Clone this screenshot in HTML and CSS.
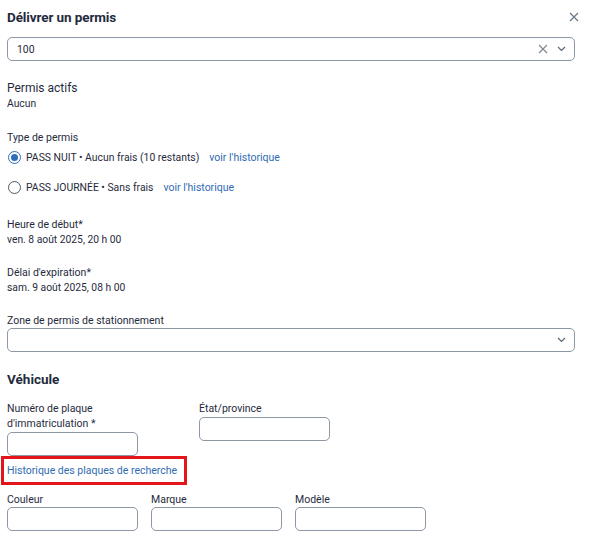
FILE: index.html
```html
<!DOCTYPE html>
<html lang="fr">
<head>
<meta charset="utf-8">
<link rel="stylesheet" href="styles.css">
</head>
<body>
<div class="dialog">
  <div class="header">
    <h1 class="title">Délivrer un permis</h1>
    <svg class="close" width="10" height="10" viewBox="0 0 10 10"><path d="M1 1L9 9M9 1L1 9" stroke="#6b7785" stroke-width="1.2" fill="none"/></svg>
  </div>
  <div class="select main-select">
    <span class="select-value">100</span>
    <span class="select-icons">
      <svg width="10" height="10" viewBox="0 0 10 10"><path d="M1 1L9 9M9 1L1 9" stroke="#7d8895" stroke-width="1.1" fill="none"/></svg>
      <svg width="9" height="6" viewBox="0 0 9 6"><path d="M1 1L4.5 4.5L8 1" stroke="#5a6674" stroke-width="1.2" fill="none"/></svg>
    </span>
  </div>

  <div class="block active">
    <div class="label-lg">Permis actifs</div>
    <div class="value">Aucun</div>
  </div>

  <div class="block type">
    <div class="label">Type de permis</div>
    <div class="radio-row">
      <span class="radio checked"></span>
      <span class="radio-text">PASS NUIT • Aucun frais (10 restants)</span>
      <a class="link">voir l'historique</a>
    </div>
    <div class="radio-row">
      <span class="radio"></span>
      <span class="radio-text">PASS JOURNÉE • Sans frais</span>
      <a class="link">voir l'historique</a>
    </div>
  </div>

  <div class="block start">
    <div class="label">Heure de début*</div>
    <div class="value">ven. 8 août 2025, 20 h 00</div>
  </div>

  <div class="block expire">
    <div class="label">Délai d'expiration*</div>
    <div class="value">sam. 9 août 2025, 08 h 00</div>
  </div>

  <div class="block zone">
    <div class="label">Zone de permis de stationnement</div>
    <div class="select zone-select">
      <span class="select-value"></span>
      <span class="select-icons">
        <svg width="9" height="6" viewBox="0 0 9 6"><path d="M1 1L4.5 4.5L8 1" stroke="#5a6674" stroke-width="1.2" fill="none"/></svg>
      </span>
    </div>
  </div>

  <h2 class="section">Véhicule</h2>

  <div class="row plate-row">
    <div class="field">
      <div class="label">Numéro de plaque d'immatriculation *</div>
      <div class="input"></div>
    </div>
    <div class="field">
      <div class="label">État/province</div>
      <div class="input"></div>
    </div>
  </div>

  <div class="history">
    <a class="link">Historique des plaques de recherche</a>
  </div>

  <div class="row car-row">
    <div class="field">
      <div class="label">Couleur</div>
      <div class="input"></div>
    </div>
    <div class="field">
      <div class="label">Marque</div>
      <div class="input"></div>
    </div>
    <div class="field">
      <div class="label">Modèle</div>
      <div class="input"></div>
    </div>
  </div>
</div>
</body>
</html>
```
FILE: styles.css
```css
* { box-sizing: border-box; }
html, body { margin: 0; padding: 0; background: #ffffff; }
body {
  font-family: Roboto, "Liberation Sans", sans-serif;
  color: #1f2b3d;
  font-size: 10.4px;
}
.dialog {
  width: 591px;
  padding: 0 16px 0 7px;
}
.header {
  display: flex;
  align-items: center;
  justify-content: space-between;
  height: 33px;
  padding-top: 0;
}
.title {
  margin: 0;
  font-size: 13.5px;
  font-weight: 700;
  color: #1f2b3d;
  letter-spacing: -0.1px;
}
.close { margin-right: -4px; }
.select {
  display: flex;
  align-items: center;
  justify-content: space-between;
  border: 1px solid #8c98a6;
  border-radius: 5px;
  height: 24px;
  padding: 0 8px 0 9px;
}
.main-select { margin-top: 4px; }
.select-value { font-size: 10.4px; color: #1f2b3d; }
.select-icons { display: flex; align-items: center; gap: 9px; }
.block { display: flex; flex-direction: column; }
.active { margin-top: 19px; }
.label-lg { font-size: 12px; line-height: 16px; color: #1f2b3d; }
.label { font-size: 10.5px; line-height: 15px; color: #1f2b3d; }
.value { font-size: 10.3px; line-height: 15px; color: #1f2b3d; }
.type { margin-top: 19px; }
.radio-row {
  display: flex;
  align-items: center;
  height: 30px;
  margin-top: -3px;
}
.radio-row + .radio-row { margin-top: 0; }
.radio {
  width: 13px;
  height: 13px;
  border: 1px solid #4d5966;
  border-radius: 50%;
  margin: 0 5px 0 1px;
  position: relative;
  flex: none;
}
.radio.checked { border-color: #2f6fba; }
.radio.checked::after {
  content: "";
  position: absolute;
  left: 2px; top: 2px;
  width: 7px; height: 7px;
  border-radius: 50%;
  background: #2f6fba;
}
.radio-text { font-size: 10.4px; color: #1f2b3d; margin-right: 10px; }
.link { color: #2f6bb3; font-size: 10.5px; text-decoration: none; white-space: nowrap; }
.start { margin-top: 15px; }
.expire { margin-top: 18px; }
.zone { margin-top: 18px; }
.zone-select { margin-top: 0; height: 24px; justify-content: flex-end; }
.section {
  margin: 18px 0 0;
  font-size: 13.5px;
  font-weight: 700;
  line-height: 18px;
  color: #1f2b3d;
}
.row { display: flex; align-items: flex-start; }
.plate-row { margin-top: 13px; gap: 61px; }
.car-row { gap: 13px; margin-top: 7px; }
.car-row .input { margin-top: 0; }
.field { width: 131px; display: flex; flex-direction: column; }
.input {
  height: 24px;
  border: 1px solid #8c98a6;
  border-radius: 5px;
  margin-top: 1px;
}
.history {
  margin: 0 0 0 -6px;
  width: 186px;
  height: 29px;
  border: 3px solid #e3151b;
  display: flex;
  align-items: center;
  padding-left: 3px;
}
```
